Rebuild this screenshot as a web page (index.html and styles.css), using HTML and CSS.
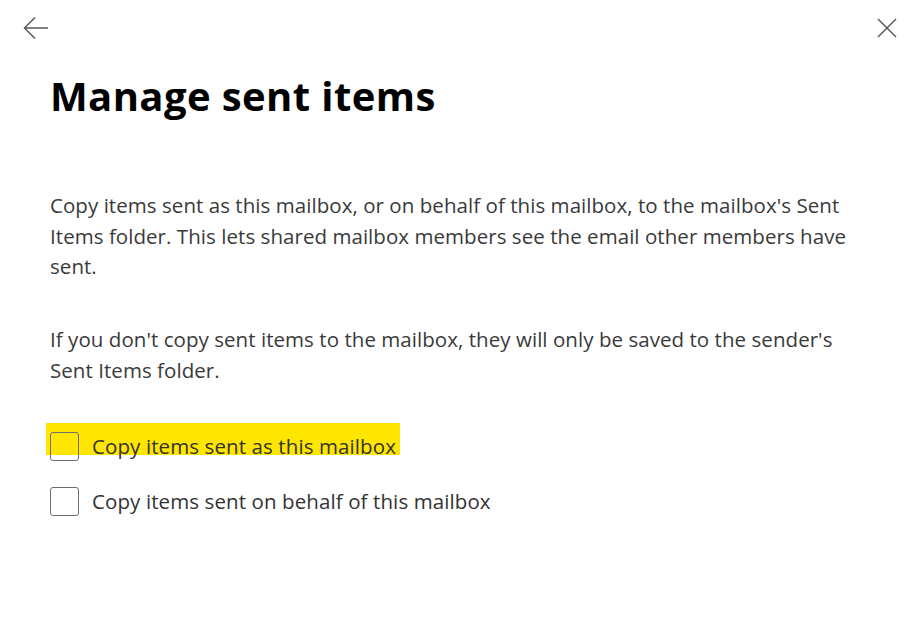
FILE: index.html
```html
<!DOCTYPE html>
<html lang="en">
<head>
<meta charset="utf-8">
<title>Manage sent items</title>
<link rel="stylesheet" href="styles.css">
</head>
<body>
<div class="panel">
  <div class="topbar">
    <button class="icon-btn back" aria-label="Back">
      <svg width="26" height="24" viewBox="0 0 26 24"><path d="M25 12H2M12 1.5L1.5 12L12 22.5" fill="none" stroke="#5a5a5a" stroke-width="1.5"/></svg>
    </button>
    <button class="icon-btn close" aria-label="Close">
      <svg width="20" height="20" viewBox="0 0 20 20"><path d="M1 1L19 19M19 1L1 19" fill="none" stroke="#5a5a5a" stroke-width="1.5"/></svg>
    </button>
  </div>
  <div class="content">
    <h1 class="title">Manage sent items</h1>
    <p class="para first">Copy items sent as this mailbox, or on behalf of this mailbox, to the mailbox's Sent Items folder. This lets shared mailbox members see the email other members have sent.</p>
    <p class="para">If you don't copy sent items to the mailbox, they will only be saved to the sender's Sent Items folder.</p>
    <div class="options">
      <label class="option highlighted">
        <span class="mark"></span>
        <span class="box"></span>
        <span class="label">Copy items sent as this mailbox</span>
      </label>
      <label class="option">
        <span class="box"></span>
        <span class="label">Copy items sent on behalf of this mailbox</span>
      </label>
    </div>
  </div>
</div>
</body>
</html>
```
FILE: styles.css
```css
html, body {
  margin: 0;
  padding: 0;
  background: #ffffff;
}
body {
  font-family: "Open Sans", "Noto Sans", sans-serif;
  color: #333333;
}
.panel {
  width: 909px;
  height: 617px;
  box-sizing: border-box;
}
.topbar {
  display: flex;
  justify-content: space-between;
  align-items: center;
  padding: 15px 12px 0 23px;
  height: 25px;
}
.icon-btn {
  border: 0;
  background: none;
  padding: 0;
  display: flex;
  align-items: center;
  justify-content: center;
}
.content {
  padding: 0 0 0 50px;
}
.title {
  margin: 32px 0 0 0;
  font-size: 40px;
  line-height: 48px;
  font-weight: 700;
  color: #000000;
  letter-spacing: 0.4px;
}
.para {
  margin: 0;
  width: 808px;
  font-size: 20.5px;
  line-height: 30.5px;
  color: #3a3a3a;
  letter-spacing: 0.05px;
}
.para.first {
  margin-top: 70px;
}
.para + .para {
  margin-top: 42.5px;
}
.options {
  margin-top: 46px;
  display: flex;
  flex-direction: column;
  gap: 25px;
}
.option {
  position: relative;
  display: flex;
  align-items: center;
  gap: 13px;
  height: 30px;
}
.mark {
  position: absolute;
  left: -4px;
  top: -8px;
  width: 354px;
  height: 32px;
  background: #ffe600;
}
.box {
  position: relative;
  width: 27px;
  height: 27px;
  border: 1.5px solid #6e6e6e;
  border-radius: 3px;
  box-sizing: content-box;
  flex: none;
}
.label {
  position: relative;
  font-size: 20.5px;
  line-height: 30px;
  color: #333333;
  letter-spacing: 0.1px;
}
```
